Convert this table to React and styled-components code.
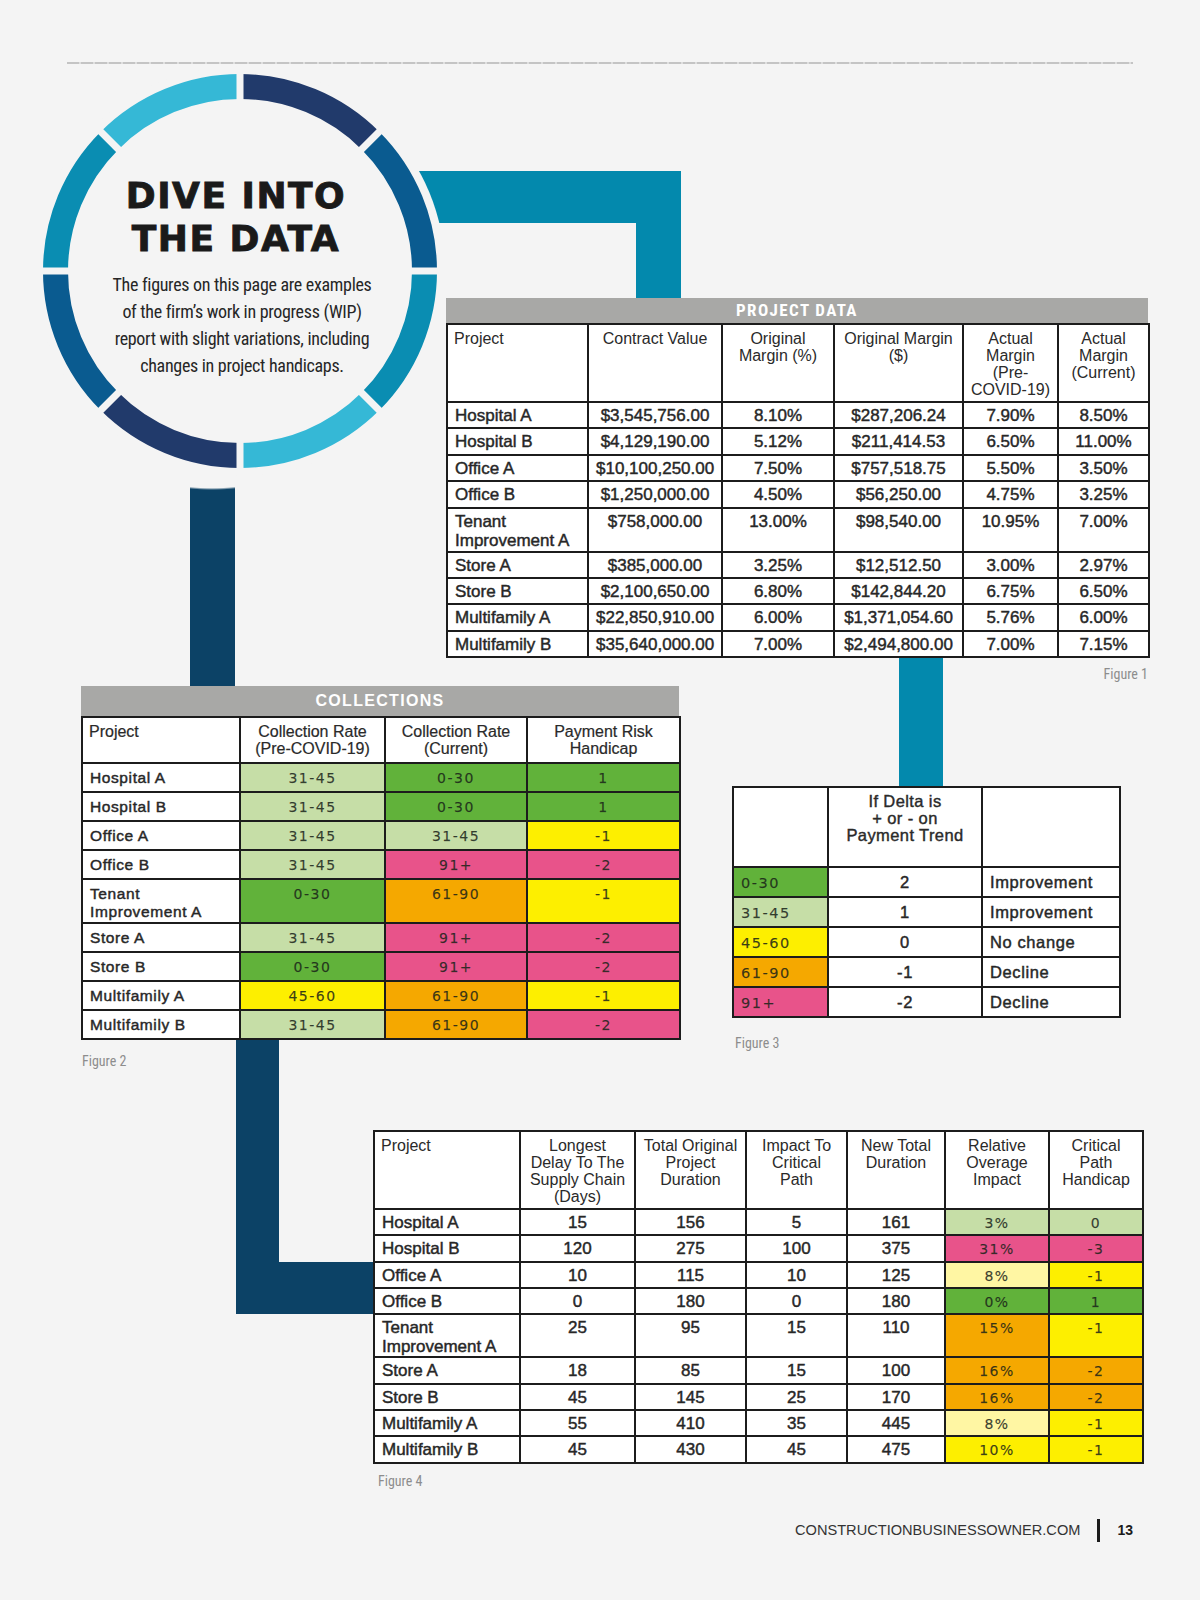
import React from 'react';
import styled, { createGlobalStyle } from 'styled-components';

const BG = '#f4f4f4';
const INK = '#1c1c1c';
const NAVY = '#0c4266';
const TEAL = '#0389ad';
const BANNER = '#a8a8a6';

const SANS = '"Liberation Sans", Arial, sans-serif';
const NARROW = '"Liberation Sans Narrow", "Arial Narrow", "Roboto Condensed", "Liberation Sans", sans-serif';

const FILLS = {
  lg: '#c6dea7',
  g: '#61b23a',
  y: '#fdef00',
  ly: '#fff6a3',
  o: '#f5a800',
  p: '#e8538a',
};

const RING = ['#213a6b', '#0a5b90', '#0a8db2', '#35b8d6'];

const GlobalStyle = createGlobalStyle`
  html, body {
    margin: 0;
    background: ${BG};
  }
`;

const Page = styled.div`
  position: relative;
  isolation: isolate;
  width: 1200px;
  height: 1600px;
  padding-top: 62px;
  box-sizing: border-box;
  overflow: hidden;
  background: ${BG};
`;

const Rule = styled.div`
  margin: 0 67px;
  height: 2px;
  background: repeating-linear-gradient(90deg, #c4c4c4 0 12px, #dedede 12px 14px);
`;

/* connectors behind the figures */
const TopElbow = styled.div`
  position: absolute;
  z-index: 0;
  left: 380px;
  top: 171px;
  width: 301px;
  height: 127px;
  box-sizing: border-box;
  border-top: 52px solid ${TEAL};
  border-right: 45px solid ${TEAL};
`;

const CircleStem = styled.div`
  position: absolute;
  z-index: 0;
  left: 190px;
  top: 484px;
  width: 45px;
  height: 203px;
  background: ${NAVY};
  -webkit-mask: radial-gradient(circle 219px at 22px -213px, transparent 99%, #000 100%);
  mask: radial-gradient(circle 219px at 22px -213px, transparent 99%, #000 100%);
`;

const MidStem = styled.div`
  position: absolute;
  z-index: 0;
  left: 899px;
  top: 656px;
  width: 44px;
  height: 131px;
  background: ${TEAL};
`;

const BottomElbow = styled.div`
  position: absolute;
  z-index: 0;
  left: 236px;
  top: 1037px;
  width: 140px;
  height: 277px;
  box-sizing: border-box;
  border-left: 43px solid ${NAVY};
  border-bottom: 52px solid ${NAVY};
`;

const Hero = styled.section`
  display: flex;
  align-items: flex-start;
  margin-top: 10px;
`;

const Strip = styled.section`
  display: flex;
  align-items: flex-start;
`;

const Badge = styled.div`
  position: relative;
  z-index: 2;
  flex: none;
  width: 394px;
  height: 394px;
  margin-left: 43px;
  padding-top: 100px;
  box-sizing: border-box;
  display: flex;
  flex-direction: column;
  align-items: center;
`;

const Ring = styled.svg`
  position: absolute;
  z-index: -1;
  left: -12px;
  top: -12px;
  width: 418px;
  height: 418px;
`;

const Title = styled.h1`
  margin: 0 8px 0 0;
  font-family: "DejaVu Sans", sans-serif;
  font-weight: 700;
  font-size: 36px;
  line-height: 43px;
  letter-spacing: 1.5px;
  text-align: center;
  color: #1a1a1a;
  -webkit-text-stroke: 0.9px #1a1a1a;
`;

const Blurb = styled.p`
  margin: 11px 0 0 4px;
  font-family: ${NARROW};
  font-size: 18px;
  line-height: 27px;
  letter-spacing: -0.3px;
  text-align: center;
  color: #262626;
`;

const Figure = styled.figure`
  position: relative;
  z-index: 1;
  flex: none;
  margin: ${p => p.$m};
  width: ${p => p.$w}px;
`;

const Banner = styled.div`
  height: ${p => p.$h}px;
  line-height: ${p => p.$h}px;
  background: ${BANNER};
  color: #fff;
  text-align: center;
  font-family: ${p => (p.$wide ? SANS : NARROW)};
  font-weight: 700;
  font-size: ${p => p.$size}px;
  letter-spacing: ${p => p.$ls}px;
`;

const Caption = styled.figcaption`
  margin-top: ${p => p.$gap}px;
  padding: 0 ${p => p.$indent}px;
  font-family: ${NARROW};
  font-size: 14px;
  line-height: 16px;
  color: #8d8d8d;
  text-align: ${p => p.$align || 'left'};
`;

const Grid = styled.table`
  width: 100%;
  border-collapse: collapse;
  table-layout: fixed;
  background: #fff;
  font-family: ${SANS};
  color: #262626;
`;

const Col = styled.col`
  width: ${p => p.$w}px;
`;

const Row = styled.tr`
  height: ${p => p.$h}px;
`;

const HeadCell = styled.th`
  border: 2px solid ${INK};
  padding: 5px 3px 0;
  vertical-align: top;
  text-align: ${p => p.$align};
  padding-left: ${p => (p.$align === 'left' ? 6 : 3)}px;
  font-weight: 400;
  font-size: ${p => p.$size}px;
  line-height: 17px;
  letter-spacing: ${p => p.$ls}px;
  white-space: nowrap;
  color: #2a2a2a;
  -webkit-text-stroke: ${p => p.$stroke}px #2a2a2a;
`;

const Cell = styled.td`
  border: 2px solid ${INK};
  padding: ${p => p.$padTop}px 7px 0;
  vertical-align: top;
  text-align: ${p => p.$align};
  background: ${p => (p.$fill ? FILLS[p.$fill] : '#fff')};
  font-size: ${p => p.$size}px;
  line-height: ${p => p.$lh}px;
  letter-spacing: ${p => p.$ls}px;
  -webkit-text-stroke: 0.45px #2a2a2a;
  color: #262626;
  white-space: nowrap;
`;

const Tint = styled.span`
  font-family: "DejaVu Sans", sans-serif;
  font-size: ${p => p.$size}px;
  letter-spacing: 1.5px;
  color: rgba(25, 35, 25, 0.85);
  -webkit-text-stroke: 0.25px rgba(25, 35, 25, 0.6);
`;

const Footer = styled.footer`
  position: absolute;
  right: 67px;
  top: 1518px;
  display: flex;
  align-items: center;
  gap: 17px;
  height: 24px;
  font-family: ${SANS};
  color: #333;
`;

const Site = styled.span`
  font-size: 14.6px;
`;

const Divider = styled.span`
  width: 3px;
  height: 23px;
  background: #1b1b1b;
`;

const Folio = styled.span`
  font-size: 14px;
  font-weight: 700;
  color: #1b1b1b;
`;

const Lines = ({ lines }) =>
  lines.map((l, i) => (
    <React.Fragment key={i}>
      {i > 0 && <br />}
      {l}
    </React.Fragment>
  ));

const DataTable = ({ cols, head, headH, rows, opts }) => (
  <Grid>
    <colgroup>
      {cols.map((c, i) => (
        <Col key={i} $w={c.w} />
      ))}
    </colgroup>
    <thead>
      <Row $h={headH}>
        {head.map((h, i) => (
          <HeadCell
            key={i}
            $align={cols[i].ha || 'center'}
            $size={opts.headSize}
            $ls={opts.headLs || 0}
            $stroke={opts.headStroke || 0}
          >
            <Lines lines={h} />
          </HeadCell>
        ))}
      </Row>
    </thead>
    <tbody>
      {rows.map((r, ri) => (
        <Row key={ri} $h={r.h}>
          {r.cells.map((c, ci) => {
            const cell = typeof c === 'string' ? { t: c } : c;
            return (
              <Cell
                key={ci}
                $align={cols[ci].a || 'center'}
                $fill={cell.f}
                $size={opts.size}
                $lh={opts.lh}
                $ls={opts.ls || 0}
                $padTop={opts.padTop}
              >
                {cell.f ? <Tint $size={opts.tintSize}>{cell.t}</Tint> : <Lines lines={cell.t.split('\n')} />}
              </Cell>
            );
          })}
        </Row>
      ))}
    </tbody>
  </Grid>
);

/* ---------- data ---------- */

const projectCols = [
  { w: 141, a: 'left', ha: 'left' },
  { w: 134 },
  { w: 112 },
  { w: 129 },
  { w: 95 },
  { w: 91 },
];
const projectHead = [
  ['Project'],
  ['Contract Value'],
  ['Original', 'Margin (%)'],
  ['Original Margin', '($)'],
  ['Actual', 'Margin', '(Pre-', 'COVID-19)'],
  ['Actual', 'Margin', '(Current)'],
];
const projectRows = [
  ['Hospital A', '$3,545,756.00', '8.10%', '$287,206.24', '7.90%', '8.50%'],
  ['Hospital B', '$4,129,190.00', '5.12%', '$211,414.53', '6.50%', '11.00%'],
  ['Office A', '$10,100,250.00', '7.50%', '$757,518.75', '5.50%', '3.50%'],
  ['Office B', '$1,250,000.00', '4.50%', '$56,250.00', '4.75%', '3.25%'],
  ['Tenant\nImprovement A', '$758,000.00', '13.00%', '$98,540.00', '10.95%', '7.00%'],
  ['Store A', '$385,000.00', '3.25%', '$12,512.50', '3.00%', '2.97%'],
  ['Store B', '$2,100,650.00', '6.80%', '$142,844.20', '6.75%', '6.50%'],
  ['Multifamily A', '$22,850,910.00', '6.00%', '$1,371,054.60', '5.76%', '6.00%'],
  ['Multifamily B', '$35,640,000.00', '7.00%', '$2,494,800.00', '7.00%', '7.15%'],
].map(cells => ({ h: cells[0].includes('\n') ? 44 : 26.4, cells }));

const c = (t, f) => ({ t, f });

const collectCols = [{ w: 158, a: 'left', ha: 'left' }, { w: 145 }, { w: 142 }, { w: 153 }];
const collectHead = [
  ['Project'],
  ['Collection Rate', '(Pre-COVID-19)'],
  ['Collection Rate', '(Current)'],
  ['Payment Risk', 'Handicap'],
];
const collectRows = [
  ['Hospital A', c('31-45', 'lg'), c('0-30', 'g'), c('1', 'g')],
  ['Hospital B', c('31-45', 'lg'), c('0-30', 'g'), c('1', 'g')],
  ['Office A', c('31-45', 'lg'), c('31-45', 'lg'), c('-1', 'y')],
  ['Office B', c('31-45', 'lg'), c('91+', 'p'), c('-2', 'p')],
  ['Tenant\nImprovement A', c('0-30', 'g'), c('61-90', 'o'), c('-1', 'y')],
  ['Store A', c('31-45', 'lg'), c('91+', 'p'), c('-2', 'p')],
  ['Store B', c('0-30', 'g'), c('91+', 'p'), c('-2', 'p')],
  ['Multifamily A', c('45-60', 'y'), c('61-90', 'o'), c('-1', 'y')],
  ['Multifamily B', c('31-45', 'lg'), c('61-90', 'o'), c('-2', 'p')],
].map(cells => ({ h: cells[0].includes('\n') ? 44 : 29, cells }));

const trendCols = [{ w: 95, a: 'left' }, { w: 154 }, { w: 138, a: 'left' }];
const trendHead = [[''], ['If Delta is', '+ or - on', 'Payment Trend'], ['']];
const trendRows = [
  [c('0-30', 'g'), '2', 'Improvement'],
  [c('31-45', 'lg'), '1', 'Improvement'],
  [c('45-60', 'y'), '0', 'No change'],
  [c('61-90', 'o'), '-1', 'Decline'],
  [c('91+', 'p'), '-2', 'Decline'],
].map(cells => ({ h: 30, cells }));

const delayCols = [
  { w: 146, a: 'left', ha: 'left' },
  { w: 115 },
  { w: 111 },
  { w: 101 },
  { w: 98 },
  { w: 104 },
  { w: 94 },
];
const delayHead = [
  ['Project'],
  ['Longest', 'Delay To The', 'Supply Chain', '(Days)'],
  ['Total Original', 'Project', 'Duration'],
  ['Impact To', 'Critical', 'Path'],
  ['New Total', 'Duration'],
  ['Relative', 'Overage', 'Impact'],
  ['Critical', 'Path', 'Handicap'],
];
const delayRows = [
  ['Hospital A', '15', '156', '5', '161', c('3%', 'lg'), c('0', 'lg')],
  ['Hospital B', '120', '275', '100', '375', c('31%', 'p'), c('-3', 'p')],
  ['Office A', '10', '115', '10', '125', c('8%', 'ly'), c('-1', 'y')],
  ['Office B', '0', '180', '0', '180', c('0%', 'g'), c('1', 'g')],
  ['Tenant\nImprovement A', '25', '95', '15', '110', c('15%', 'o'), c('-1', 'y')],
  ['Store A', '18', '85', '15', '100', c('16%', 'o'), c('-2', 'o')],
  ['Store B', '45', '145', '25', '170', c('16%', 'o'), c('-2', 'o')],
  ['Multifamily A', '55', '410', '35', '445', c('8%', 'ly'), c('-1', 'y')],
  ['Multifamily B', '45', '430', '45', '475', c('10%', 'y'), c('-1', 'y')],
].map(cells => ({ h: cells[0].includes('\n') ? 43 : 26.3, cells }));

/* ---------- ring ---------- */

const CX = 209;
const RMID = 184.5;

const arc = i => {
  const a0 = ((i * 45 - 90) * Math.PI) / 180;
  const a1 = (((i + 1) * 45 - 90) * Math.PI) / 180;
  const x0 = CX + RMID * Math.cos(a0);
  const y0 = CX + RMID * Math.sin(a0);
  const x1 = CX + RMID * Math.cos(a1);
  const y1 = CX + RMID * Math.sin(a1);
  return `M${x0.toFixed(2)} ${y0.toFixed(2)} A${RMID} ${RMID} 0 0 1 ${x1.toFixed(2)} ${y1.toFixed(2)}`;
};

const RingArt = () => (
  <Ring viewBox="0 0 418 418">
    <circle cx={CX} cy={CX} r={205} fill={BG} />
    {Array.from({ length: 8 }, (_, i) => (
      <path key={i} d={arc(i)} fill="none" stroke={RING[i % 4]} strokeWidth="25" />
    ))}
    {[0, 45, 90, 135].map(a => (
      <line
        key={a}
        x1={CX}
        y1={CX - 200}
        x2={CX}
        y2={CX + 200}
        stroke={BG}
        strokeWidth="7"
        transform={`rotate(${a} ${CX} ${CX})`}
      />
    ))}
  </Ring>
);

const bodyOpts = { size: 17, lh: 19, padTop: 3, headSize: 16, tintSize: 14 };
const collectOpts = { size: 15.5, lh: 18, padTop: 5, headSize: 16, ls: 0.6, tintSize: 14, headStroke: 0.2 };
const trendOpts = {
  size: 16.5,
  lh: 20,
  padTop: 4,
  headSize: 16.5,
  ls: 0.6,
  headLs: 0.4,
  tintSize: 14.5,
  headStroke: 0.4,
};

export default function App() {
  return (
    <Page>
      <GlobalStyle />
      <TopElbow />
      <CircleStem />
      <MidStem />
      <BottomElbow />

      <Rule />

      <Hero>
        <Badge>
          <RingArt />
          <Title>
            DIVE INTO
            <br />
            THE DATA
          </Title>
          <Blurb>
            The figures on this page are examples
            <br />
            of the firm’s work in progress (WIP)
            <br />
            report with slight variations, including
            <br />
            changes in project handicaps.
          </Blurb>
        </Badge>

        <Figure $m="224px 0 0 9px" $w={702}>
          <Banner $h={25} $size={17} $ls={1.4}>
            PROJECT DATA
          </Banner>
          <DataTable cols={projectCols} head={projectHead} headH={78} rows={projectRows} opts={bodyOpts} />
          <Caption $gap={8} $indent={0} $align="right">
            Figure 1
          </Caption>
        </Figure>
      </Hero>

      <Strip>
        <Figure $m="4px 0 0 81px" $w={598}>
          <Banner $h={30} $size={16} $ls={1.3} $wide>
            COLLECTIONS
          </Banner>
          <DataTable cols={collectCols} head={collectHead} headH={46} rows={collectRows} opts={collectOpts} />
          <Caption $gap={13} $indent={1}>
            Figure 2
          </Caption>
        </Figure>

        <Figure $m="104px 0 0 53px" $w={387}>
          <DataTable cols={trendCols} head={trendHead} headH={80} rows={trendRows} opts={trendOpts} />
          <Caption $gap={17} $indent={3}>
            Figure 3
          </Caption>
        </Figure>
      </Strip>

      <Strip>
        <Figure $m="61px 0 0 373px" $w={769}>
          <DataTable cols={delayCols} head={delayHead} headH={78} rows={delayRows} opts={bodyOpts} />
          <Caption $gap={9} $indent={5}>
            Figure 4
          </Caption>
        </Figure>
      </Strip>

      <Footer>
        <Site>CONSTRUCTIONBUSINESSOWNER.COM</Site>
        <Divider />
        <Folio>13</Folio>
      </Footer>
    </Page>
  );
}
